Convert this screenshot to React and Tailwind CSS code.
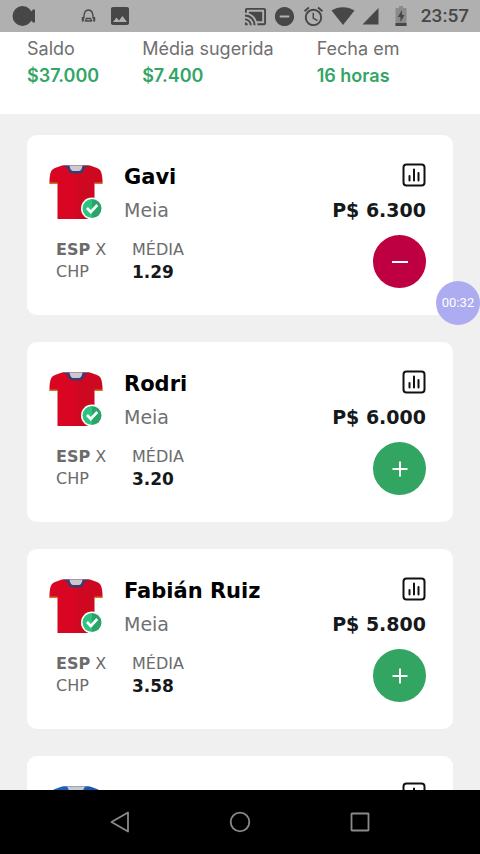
import React, { useState } from 'react';
import {
  MdAlarm,
  MdCastConnected,
  MdImage,
  MdRemoveCircle,
} from 'react-icons/md';

const players = [
  { id: 1, name: 'Gavi', position: 'Meia', team: 'ESP', rival: 'CHP', average: '1.29', price: '6.300', kit: 'spain' },
  { id: 2, name: 'Rodri', position: 'Meia', team: 'ESP', rival: 'CHP', average: '3.20', price: '6.000', kit: 'spain' },
  { id: 3, name: 'Fabián Ruiz', position: 'Meia', team: 'ESP', rival: 'CHP', average: '3.58', price: '5.800', kit: 'spain' },
];

const kits = {
  spain: {
    left: '#d80622',
    right: '#cf0822',
    trim: '#3f3a72',
    cuff: '#c9771f',
    collar: 'M20.500 0.500H33.500C33 4 32 6 29 6H25C22 6 21 4 20.500 0.500z',
  },
  blue: {
    left: '#1f5fb8',
    right: '#1a55a8',
    trim: '#1f5fb8',
    cuff: '#ffffff',
    collar: 'M18 0.500H36L33 6H21z',
  },
};

function StatusBar() {
  return (
    <div className="flex h-8 shrink-0 items-center justify-between bg-[#b0b0b0] pl-3 pr-[11px] text-[#474747]">
      <div className="flex items-center">
        <svg width="24" height="22" viewBox="0 0 24 22" fill="currentColor">
          <circle cx="10.500" cy="11" r="10" />
          <path d="M16 6.500h3L21 4.500h2v13h-2l-2-2h-3z" />
        </svg>
        <svg className="ml-[45px]" width="15" height="16" viewBox="0 0 15 16" fill="none" stroke="currentColor">
          <path d="M2.800 10.500C2.800 5 4 2 7.500 2s4.700 3 4.700 8.500" strokeWidth="1.400" />
          <path d="M1.800 9v4.500M13.200 9v4.500" strokeWidth="2" />
          <path d="M4 13.500l1.500-3h4l1.500 3M5 13h5" strokeWidth="1.300" />
        </svg>
        <MdImage className="ml-3" size={24} />
      </div>
      <div className="flex items-center">
        <MdCastConnected size={23} />
        <MdRemoveCircle className="ml-1.5" size={23} />
        <MdAlarm className="ml-1.5" size={23} />
        <svg className="ml-1.5" width="24" height="20" viewBox="0 0 24 20" fill="currentColor">
          <path d="M12 19L0.500 4.500C7 0 17 0 23.500 4.500z" />
        </svg>
        <svg className="ml-[7px]" width="17" height="18" viewBox="0 0 17 18" fill="currentColor">
          <path d="M16.500 1v16.500H0.500z" />
        </svg>
        <svg className="ml-4" width="12" height="20" viewBox="0 0 12 20">
          <path d="M4 0h4v2h3.500v18h-11V2H4z" fill="#8b8b8b" />
          <path d="M0.500 17h11v3h-11z" fill="#474747" />
          <path d="M7 4L2.800 11h2.700v5L9.500 9H7z" fill="#474747" />
        </svg>
        <span className="ml-3.5 font-['Roboto',sans-serif] text-[19px] font-medium leading-6">23:57</span>
      </div>
    </div>
  );
}

function Summary() {
  const items = [
    { label: 'Saldo', value: '$37.000' },
    { label: 'Média sugerida', value: '$7.400' },
    { label: 'Fecha em', value: '16 horas' },
  ];

  return (
    <header className="flex h-[82px] shrink-0 gap-[43px] bg-white px-[27px] pt-[3px] font-['Inter',sans-serif] text-[18px] leading-[27px]">
      {items.map((item) => (
        <div key={item.label}>
          <p className="text-[#707070]">{item.label}</p>
          <p className="font-semibold text-[#33a566]">{item.value}</p>
        </div>
      ))}
    </header>
  );
}

function Jersey({ kit, confirmed }) {
  const { left, right, trim, cuff, collar } = kits[kit];

  return (
    <svg className="shrink-0" width="54" height="54" viewBox="0 0 54 54">
      <path d="M13 0.500H27V54H8.500V18.500H0.500V15C1 8 2 4.500 6 3z" fill={left} />
      <path d="M41 0.500H27V54H45.500V18.500H53.500V15C53 8 52 4.500 48 3z" fill={right} />
      <path d="M0.500 17.500h8v1.500h-8zM45.500 17.500h8v1.500h-8z" fill={cuff} />
      <path d="M13.500 0.500H40.500L35.500 3C34.500 7 33 8.500 30 8.500H24C21 8.500 19.500 7 18.500 3z" fill={trim} />
      <path d={collar} fill="#c9c9ce" />
      {confirmed && (
        <>
          <circle cx="43" cy="43.500" r="11" fill="#fff" />
          <path d="M43 34a9.500 9.500 0 0 0 0 19z" fill="#2cc480" />
          <path d="M43 34a9.500 9.500 0 0 1 0 19z" fill="#29a568" />
          <path d="M38 43l3.800 4 6.500-7" fill="none" stroke="#fff" strokeWidth="2.600" />
        </>
      )}
    </svg>
  );
}

function StatsButton({ label }) {
  return (
    <button type="button" aria-label={label} className="-mt-1">
      <svg width="24" height="24" viewBox="0 0 24 24" fill="none" stroke="#111" strokeWidth="2" strokeLinecap="round">
        <rect x="1.500" y="1.500" width="21" height="21" rx="3" />
        <path d="M7.500 13v4.500M12 6.500v11M16.500 10v7.500" />
      </svg>
    </button>
  );
}

function PlayerCard({ player, selected, onToggle }) {
  return (
    <article className="shrink-0 rounded-[10px] bg-white pb-[27px] pl-[22px] pr-[27px] pt-[30px]">
      <div className="flex">
        <Jersey kit={player.kit} confirmed />
        <div className="ml-[21px] flex-1">
          <div className="flex h-6 items-center justify-between">
            <h2 className="text-[21px] font-bold leading-6 text-black">{player.name}</h2>
            <StatsButton label={`Estatísticas de ${player.name}`} />
          </div>
          <div className="mt-[9px] flex items-center justify-between text-[19px] leading-6">
            <p className="text-[#707070]">{player.position}</p>
            <p className="font-bold text-[#16191b]">P$ {player.price}</p>
          </div>
        </div>
      </div>

      <div className="mt-[13px] flex items-start pl-[7px] text-[16px] leading-[22px] text-[#6b6b6b]">
        <div className="mt-1 w-[76px]">
          <p><b>{player.team}</b> X</p>
          <p>{player.rival}</p>
        </div>
        <div className="mt-1 flex-1">
          <p>MÉDIA</p>
          <p className="text-[17px] font-bold text-[#16191b]">{player.average}</p>
        </div>
        <button
          type="button"
          onClick={onToggle}
          aria-label={selected ? `Remover ${player.name}` : `Adicionar ${player.name}`}
          className={`flex size-[53px] items-center justify-center rounded-full ${selected ? 'bg-[#be0042]' : 'bg-[#33a563]'}`}
        >
          <svg width="16" height="16" viewBox="0 0 16 16" stroke="#fff" strokeWidth="2">
            <path d={selected ? 'M0 8h16' : 'M0.500 8h15M8 0.500v15'} />
          </svg>
        </button>
      </div>
    </article>
  );
}

// Next card in the list, still below the fold
function NextCard() {
  return (
    <article className="flex shrink-0 justify-between rounded-t-[10px] bg-white pl-[22px] pr-[27px] pt-[30px]">
      <Jersey kit="blue" />
      <div className="h-6">
        <StatsButton label="Estatísticas" />
      </div>
    </article>
  );
}

function NavigationBar() {
  return (
    <nav className="grid h-16 shrink-0 grid-cols-3 place-items-center bg-black px-[60px]">
      <button type="button" aria-label="Voltar">
        <svg width="20" height="22" viewBox="0 0 20 22" fill="none" stroke="#8a8a8a" strokeWidth="1.800">
          <path d="M18 1.500v19L1.500 11z" strokeLinejoin="round" />
        </svg>
      </button>
      <button type="button" aria-label="Início">
        <svg width="22" height="22" viewBox="0 0 22 22" fill="none" stroke="#8a8a8a" strokeWidth="1.800">
          <circle cx="11" cy="11" r="9.300" />
        </svg>
      </button>
      <button type="button" aria-label="Recentes">
        <svg width="20" height="20" viewBox="0 0 20 20" fill="none" stroke="#8a8a8a" strokeWidth="1.800">
          <rect x="1.500" y="1.500" width="17" height="17" rx="0.500" />
        </svg>
      </button>
    </nav>
  );
}

export default function App() {
  const [selectedIds, setSelectedIds] = useState([1]);

  const toggle = (id) => {
    setSelectedIds((ids) => (ids.includes(id) ? ids.filter((i) => i !== id) : [...ids, id]));
  };

  return (
    <div className="relative flex h-screen flex-col bg-[#f0f0f0] font-['DejaVu_Sans',sans-serif]">
      <StatusBar />
      <Summary />
      <main className="flex min-h-0 flex-1 flex-col gap-[27px] overflow-hidden px-[27px] pt-[21px]">
        {players.map((player) => (
          <PlayerCard
            key={player.id}
            player={player}
            selected={selectedIds.includes(player.id)}
            onToggle={() => toggle(player.id)}
          />
        ))}
        <NextCard />
      </main>
      <NavigationBar />

      {/* Recording timer bubble */}
      <div className="absolute right-0 top-[281px] flex size-11 items-center justify-center rounded-full bg-[#aeacf0] font-['Roboto',sans-serif] text-[13px] text-white">
        00:32
      </div>
    </div>
  );
}
